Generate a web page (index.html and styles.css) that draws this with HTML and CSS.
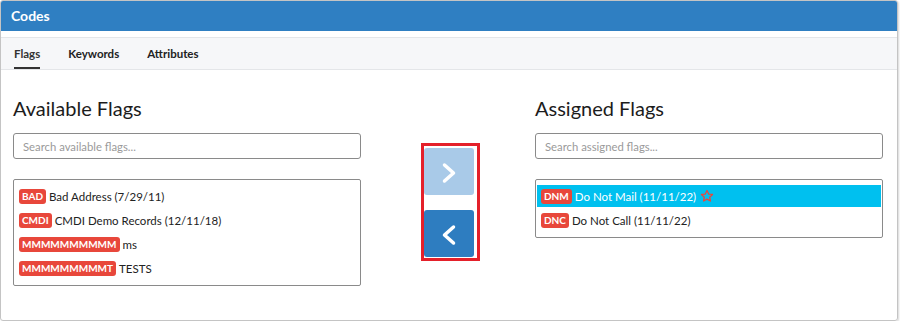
FILE: index.html
```html
<!DOCTYPE html>
<html lang="en">
<head>
    <meta charset="UTF-8">
    <meta name="viewport" content="width=device-width, initial-scale=1.0">
    <title>Codes</title>
    <link rel="stylesheet" href="styles.css">
</head>
<body>
    <div class="panel">
        <div class="panel-header">Codes</div>

        <!-- Tabs -->
        <div class="tabs">
            <span class="tab active">Flags</span>
            <span class="tab">Keywords</span>
            <span class="tab">Attributes</span>
        </div>

        <div class="picker">
            <!-- Available -->
            <div class="column">
                <h2>Available Flags</h2>
                <input type="text" class="search" placeholder="Search available flags...">
                <div class="list">
                    <div class="item"><span class="badge">BAD</span><span>Bad Address (7/29/11)</span></div>
                    <div class="item"><span class="badge">CMDI</span><span>CMDI Demo Records (12/11/18)</span></div>
                    <div class="item"><span class="badge">MMMMMMMMMM</span><span>ms</span></div>
                    <div class="item"><span class="badge">MMMMMMMMMT</span><span>TESTS</span></div>
                </div>
            </div>

            <!-- Move buttons -->
            <div class="mover">
                <div class="mover-box">
                    <button class="move disabled">
                        <svg width="16" height="22" viewBox="0 0 16 22"><path d="M3.5 3 L12.5 11 L3.5 19" fill="none" stroke="#fff" stroke-width="3.5" stroke-linecap="round" stroke-linejoin="round"/></svg>
                    </button>
                    <button class="move">
                        <svg width="16" height="22" viewBox="0 0 16 22"><path d="M12.5 3 L3.5 11 L12.5 19" fill="none" stroke="#fff" stroke-width="3.5" stroke-linecap="round" stroke-linejoin="round"/></svg>
                    </button>
                </div>
            </div>

            <!-- Assigned -->
            <div class="column">
                <h2>Assigned Flags</h2>
                <input type="text" class="search" placeholder="Search assigned flags...">
                <div class="list">
                    <div class="item selected">
                        <span class="badge">DNM</span><span>Do Not Mail (11/11/22)</span>
                        <svg class="star" width="14" height="14" viewBox="0 0 24 24"><path d="M12 2.5l2.9 6.1 6.6.8-4.9 4.6 1.3 6.6L12 17.3l-5.9 3.3 1.3-6.6-4.9-4.6 6.6-.8z" fill="none" stroke="#e8473b" stroke-width="2.2" stroke-linejoin="round"/></svg>
                    </div>
                    <div class="item"><span class="badge">DNC</span><span>Do Not Call (11/11/22)</span></div>
                </div>
            </div>
        </div>
    </div>
</body>
</html>
```
FILE: styles.css
```css
* {
    margin: 0;
    padding: 0;
    box-sizing: border-box;
}

body {
    font-family: Lato, 'Open Sans', sans-serif;
    color: #222;
    background: #fff;
}

.panel {
    width: 898px;
    height: 321px;
    border: 1px solid #c4c4c4;
    border-radius: 3px;
    box-shadow: 1px 1px 2px rgba(0, 0, 0, 0.15);
    overflow: hidden;
}

.panel-header {
    background: #2f7fc2;
    color: #fff;
    font-weight: bold;
    font-size: 14px;
    height: 30px;
    line-height: 30px;
    padding-left: 10px;
}

.tabs {
    margin-top: 6px;
    height: 33px;
    background: #f6f7f9;
    border-top: 1px solid #e4e6e9;
    border-bottom: 1px solid #e4e6e9;
    display: flex;
    gap: 28px;
    padding-left: 13px;
}

.tab {
    font-size: 11.5px;
    font-weight: bold;
    color: #222;
    line-height: 31px;
    border-bottom: 2px solid transparent;
}

.tab.active {
    color: #333;
    border-bottom-color: #333;
}

.picker {
    display: flex;
    padding: 26px 14px 0 12px;
}

.column {
    width: 348px;
    display: flex;
    flex-direction: column;
}

h2 {
    font-size: 20px;
    font-weight: normal;
    line-height: 24px;
    color: #1c1c1c;
}

.search {
    margin-top: 13px;
    height: 26px;
    border: 1px solid #8a8a8a;
    border-radius: 3px;
    padding-left: 9px;
    font-family: Lato, sans-serif;
    font-size: 11.3px;
    outline: none;
}

.search::placeholder {
    color: #9a9a9a;
}

.list {
    margin-top: 20px;
    border: 1px solid #8a8a8a;
    border-radius: 2px;
    padding: 5px 1px 6px;
    display: flex;
    flex-direction: column;
    gap: 2px;
}

.item {
    height: 22px;
    display: flex;
    align-items: center;
    gap: 3px;
    padding-left: 4px;
    font-size: 11.5px;
}

.item.selected {
    background: #00c0ef;
    color: #fff;
}

.badge {
    background: #e8473b;
    color: #fff;
    font-size: 10px;
    font-weight: bold;
    line-height: 15px;
    padding: 0 3px;
    border-radius: 3px;
}

.star {
    margin-left: 1px;
}

.mover {
    flex: 1;
    display: flex;
    justify-content: center;
    padding-top: 47px;
    padding-left: 5px;
}

.mover-box {
    border: 3px solid #e4202a;
    padding: 2px 3px 1px 0;
    display: flex;
    flex-direction: column;
    gap: 15px;
    height: 118px;
}

.move {
    width: 50px;
    height: 47px;
    border: none;
    border-radius: 3px;
    background: #2e7dc0;
    display: flex;
    align-items: center;
    justify-content: center;
    padding-top: 3px;
}

.move.disabled {
    background: #a9cae8;
}
```
